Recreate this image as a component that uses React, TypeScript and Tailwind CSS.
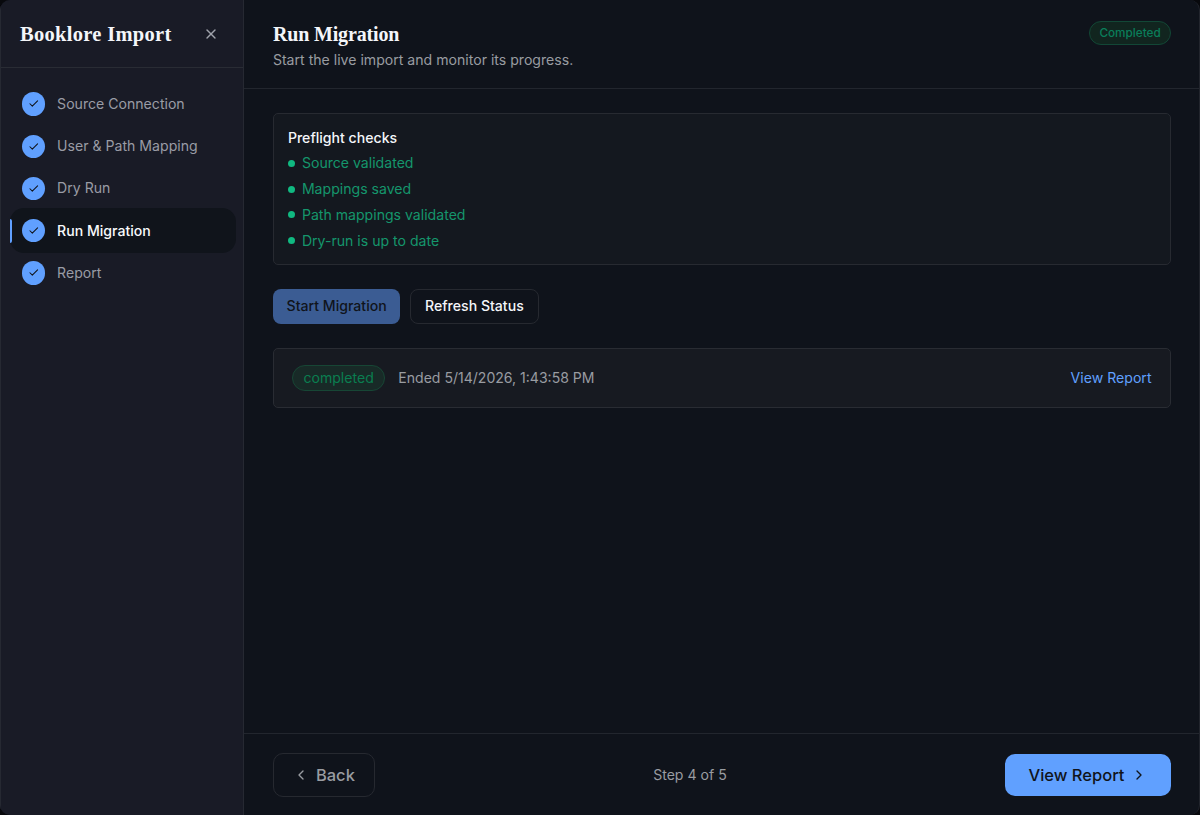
import React from "react";
import { Check, ChevronLeft, ChevronRight, X } from "lucide-react";

const steps = ["Source Connection", "User & Path Mapping", "Dry Run", "Run Migration", "Report"];
const checks = ["Source validated", "Mappings saved", "Path mappings validated", "Dry-run is up to date"];

function Step({ label, active }: { label: string; active: boolean }) {
  return (
    <li
      className={`relative flex h-[42.2px] items-center gap-[11.8px] pl-3 ${
        active ? "text-[#f8fafc] font-medium" : "text-[#999ca5]"
      }`}
    >
      {active && <span className="absolute -inset-y-[1.5px] left-0 -right-px rounded-[14px] bg-[#10141b]" />}
      {active && <span className="absolute left-0 top-[9px] h-6 w-[2.5px] rounded-r bg-[#60a0ff]" />}
      <span className="relative flex size-[23.5px] shrink-0 items-center justify-center rounded-full bg-[#60a0ff] text-[#10141b]">
        <Check size={11.5} strokeWidth={2.2} />
      </span>
      <span className="relative">{label}</span>
    </li>
  );
}

export default function App() {
  return (
    <div className="h-[815px] w-[1200px] overflow-hidden bg-[#08090d]">
      <div className="flex h-full overflow-hidden rounded-[10px] border-r border-[#22252d] bg-[#0f131b] font-['Inter',sans-serif] text-[14.1px] leading-5">
        <aside className="flex w-[244.4px] shrink-0 flex-col border-l border-r border-[#262932] bg-[#191b26]">
          <header className="flex h-[68.4px] shrink-0 items-center justify-between border-b border-[#292c34] pl-[19px] pr-[24.5px] pt-[1.5px]">
            <h1 className="font-['Liberation_Serif',serif] text-[20.5px] font-bold leading-7 tracking-[0.3px] text-[#f4f6fa]">
              Booklore Import
            </h1>
            <X size={16} strokeWidth={2} className="text-[#a0a3ab]" />
          </header>
          <ul className="ml-[8.8px] mr-2 pt-[14.6px]">
            {steps.map((s) => (
              <Step key={s} label={s} active={s === "Run Migration"} />
            ))}
          </ul>
        </aside>

        <main className="flex min-w-0 flex-1 flex-col">
          <header className="flex h-[89.4px] shrink-0 items-start justify-between border-b border-[#22262e] pl-[28.5px] pr-7 pt-5">
            <div>
              <h2 className="font-['Liberation_Serif',serif] text-[20px] font-bold leading-7 tracking-[-0.15px] text-[#f4f6fa]">
                Run Migration
              </h2>
              <p className="mt-0.5 text-[#999ca1]">Start the live import and monitor its progress.</p>
            </div>
            <span className="mt-px flex h-6 items-center rounded-full border border-[#124736] bg-[#11251f] px-[9.3px] text-[11.75px] font-medium text-[#0a7e5a]">
              Completed
            </span>
          </header>

          <div className="flex flex-1 flex-col pl-[28.5px] pr-7 pt-[23.6px]">
            <section className="h-[152.4px] rounded-[5px] border border-[#272a31] bg-[#14181f] px-3.5 pt-[13.6px]">
              <h3 className="font-medium text-[#f4f6fa]">Preflight checks</h3>
              <ul>
                {checks.map((c) => (
                  <li key={c} className="mt-[5.8px] flex items-center gap-[7px] text-[#15966c]">
                    <span className="size-[7px] rounded-full bg-[#10b981]" />
                    {c}
                  </li>
                ))}
              </ul>
            </section>

            <div className="mt-[23.5px] flex h-[35px] gap-[9.5px]">
              <button className="w-[127.5px] rounded-lg bg-[#3b5c93] font-medium text-[#10141b]">Start Migration</button>
              <button className="w-[129px] rounded-lg border border-[#262930] font-medium text-[#f4f6fa]">Refresh Status</button>
            </div>

            <section className="mt-6 flex h-[60.5px] items-center rounded-[5px] border border-[#292c33] bg-[#171a21] px-[18.5px]">
              <span className="flex h-[26px] items-center rounded-full border border-[#174635] bg-[#182a27] px-[10px] text-[#0a7e50]">
                completed
              </span>
              <span className="ml-[13.5px] text-[14.05px] text-[#999ca1]">Ended 5/14/2026, 1:43:58 PM</span>
              <span className="ml-auto text-[#60a0ff]">View Report</span>
            </section>
          </div>

          <footer className="flex h-[82.5px] shrink-0 items-center justify-between border-t border-[#22262e] pl-[28.5px] pr-7 pt-[0.8px] text-[16.5px] font-medium">
            <button className="flex h-11 w-[102px] items-center justify-center gap-[7px] rounded-[10px] border border-[#262930] text-[#999ca1]">
              <ChevronLeft size={16} strokeWidth={2} />
              Back
            </button>
            <span className="text-[14.1px] font-normal text-[#999ca1]">Step 4 of 5</span>
            <button className="flex h-[42px] w-[166px] items-center justify-center gap-[7px] rounded-[10px] bg-[#60a0ff] text-[#10141b]">
              View Report
              <ChevronRight size={16} strokeWidth={2} />
            </button>
          </footer>
        </main>
      </div>
    </div>
  );
}
